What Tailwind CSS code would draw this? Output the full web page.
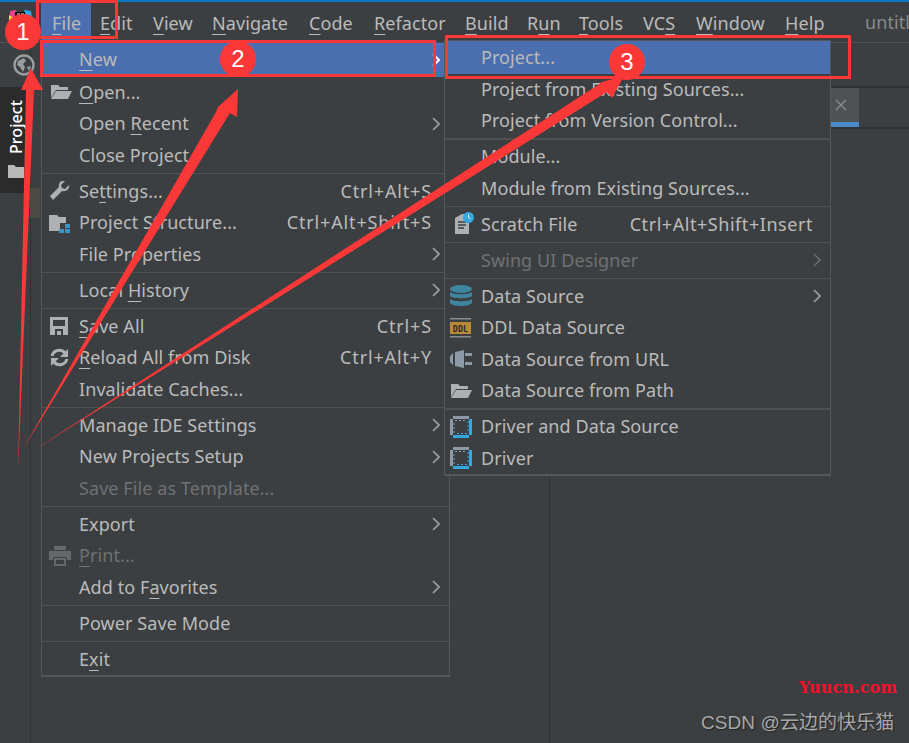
<!DOCTYPE html>
<html lang="en">
  <head>
    <meta charset="UTF-8" />
    <title>New Project</title>
    <script src="https://cdn.jsdelivr.net/npm/@tailwindcss/browser@4"></script>
  </head>
  <body class="select-none">
    <div class="relative w-[909px] h-[743px] overflow-hidden bg-[#3c3f41] font-['Noto_Sans','Noto_Sans_CJK_SC',sans-serif] text-[18px] tracking-[0.08px] text-[#bbbbbb]">
      <!-- top bar -->
      <div class="h-[2px] bg-[#0a78c2]"></div>
      <div class="flex h-[41px] items-end border-b border-[#515151]">
        <div class="w-[41px] shrink-0 self-start pl-[9px] pt-[8px]">
          <svg class="block" width="24" height="12" viewBox="0 0 24 12">
            <path d="M1 1l6-1 1 6-5 6H0z" fill="#ef3f8a" />
            <path d="M0 5l5 3-3 4H0z" fill="#f7d843" />
            <path d="M15 0l7 1 1 8-6 3z" fill="#2aa8e8" />
            <rect x="6" y="2" width="10" height="10" fill="#000" />
            <path d="M8 4h3M12 4h3" stroke="#fff" stroke-width="1.2" />
          </svg>
        </div>
        <div class="flex h-[40px] w-[50px] shrink-0 items-center bg-[#4b6eaf] pl-[11px] pt-[2px]"><span><u class="underline-offset-4">F</u>ile</span></div>
        <div class="flex h-[40px] w-[53px] shrink-0 items-center pl-[9px] pt-[2px]"><span><u class="underline-offset-4">E</u>dit</span></div>
        <div class="flex h-[40px] w-[58px] shrink-0 items-center pl-[9px] pt-[2px]"><span><u class="underline-offset-4">V</u>iew</span></div>
        <div class="flex h-[40px] w-[107px] shrink-0 items-center pl-[10px] pt-[2px]"><span><u class="underline-offset-4">N</u>avigate</span></div>
        <div class="flex h-[40px] w-[65px] shrink-0 items-center pt-[2px]"><span><u class="underline-offset-4">C</u>ode</span></div>
        <div class="flex h-[40px] w-[91px] shrink-0 items-center pt-[2px]"><span><u class="underline-offset-4">R</u>efactor</span></div>
        <div class="flex h-[40px] w-[62px] shrink-0 items-center pt-[2px]"><span><u class="underline-offset-4">B</u>uild</span></div>
        <div class="flex h-[40px] w-[52px] shrink-0 items-center pt-[2px]"><span>R<u class="underline-offset-4">u</u>n</span></div>
        <div class="flex h-[40px] w-[64px] shrink-0 items-center pt-[2px]"><span><u class="underline-offset-4">T</u>ools</span></div>
        <div class="flex h-[40px] w-[53px] shrink-0 items-center pt-[2px]"><span>VC<u class="underline-offset-4">S</u></span></div>
        <div class="flex h-[40px] w-[89px] shrink-0 items-center pt-[2px]"><span><u class="underline-offset-4">W</u>indow</span></div>
        <div class="flex h-[40px] w-[80px] shrink-0 items-center pt-[2px]"><span><u class="underline-offset-4">H</u>elp</span></div>
        <div class="flex h-[40px] shrink-0 items-center text-[#8a8a8a]"><span>untitl</span></div>
      </div>

      <!-- body under the bar -->
      <div class="flex h-[700px]">
        <div class="w-[31px] shrink-0 border-r border-[#323232]">
          <div class="flex h-[44px] items-center pl-[13px]">
            <svg class="shrink-0" width="22" height="22" viewBox="0 0 22 22">
              <circle cx="11" cy="11" r="9.5" fill="#3c3f41" stroke="#9a9c9e" stroke-width="2.4" />
              <path d="M5 7l6-3 2 3-3 3 2 3-2 5-3-5-3-2zM14 13l4-1-2 5z" fill="#9a9c9e" />
            </svg>
          </div>
          <div class="flex h-[106px] w-[30px] flex-col items-center bg-[#2b2b2b] pl-[1px] pt-[13px]">
            <span class="text-[16px] font-medium leading-[18px] text-white [writing-mode:vertical-rl] rotate-180">Project</span>
            <svg class="mt-[11px]" width="16" height="13" viewBox="0 0 16 13"><path d="M0 0h6l2 2h8v11H0z" fill="#b8b8b8" /></svg>
          </div>
          <div class="-mt-[5px] ml-[30px] h-[30px] w-[10px] bg-[#4b4a43]"></div>
        </div>
        <div class="flex-1"></div>
      </div>

      <!-- editor tab behind the menus -->
      <div class="absolute left-[831px] top-[86px] flex h-[43px] w-[78px] border-y-2 border-[#323232]">
        <div class="flex h-full w-[28px] items-center border-b-[5px] border-[#4a88c7] bg-[#4e5254] pl-[4px]">
          <svg width="12" height="12" viewBox="0 0 12 12"><path d="M1 1l10 10M11 1L1 11" stroke="#8a8d8f" stroke-width="1.4" /></svg>
        </div>
      </div>
      <div class="absolute left-[549px] top-[470px] h-[273px] w-px bg-[#323232]"></div>

      <!-- File menu -->
      <div class="absolute left-[41px] top-[43px] w-[409px] border border-t-0 border-[#555759] border-b-2 bg-[#3c3f41]">
        <div class="flex h-[33.5px] items-center bg-[#4b6eaf] pl-[6px] pr-[9px]"><span class="w-[31px]"></span><span><u class="underline-offset-4">N</u>ew</span><svg class="ml-auto" width="8" height="14" viewBox="0 0 8 14"><path d="M1 1l6 6-6 6" fill="none" stroke="#ffffff" stroke-width="2" /></svg></div>
        <div class="flex h-[31.5px] items-center pl-[8px] pr-[17px]"><span class="w-[29px]"><svg width="22" height="18" viewBox="0 0 22 18"><path d="M1 2h7l2 2h8v3H6L1 15z" fill="#aeb0b2" /><path d="M6 8h16l-4 8H1z" fill="#aeb0b2" /></svg></span><span><u class="underline-offset-4">O</u>pen...</span></div>
        <div class="flex h-[31.5px] items-center pl-[6px] pr-[9px]"><span class="w-[31px]"></span><span>Open <u class="underline-offset-4">R</u>ecent</span><svg class="ml-auto" width="8" height="14" viewBox="0 0 8 14"><path d="M1 1l6 6-6 6" fill="none" stroke="#a0a2a4" stroke-width="1.6" /></svg></div>
        <div class="flex h-[31.5px] items-center pl-[6px] pr-[17px]"><span class="w-[31px]"></span><span>Close Project</span></div>
        <div class="flex h-[4.5px] items-center"><div class="h-px w-full bg-[#515151]"></div></div>
        <div class="flex h-[31.5px] items-center pl-[7px] pr-[17px]"><span class="w-[30px]"><svg width="22" height="20" viewBox="0 0 22 20"><path d="M20 4l-4 4-3-1-1-3 4-4c-4-1-7 2-6 6L1 15l3 4 9-9c4 1 8-2 7-6z" fill="#aeb0b2" /></svg></span><span>Se<u class="underline-offset-4">t</u>tings...</span><span class="ml-auto tracking-[0.85px]">Ctrl+Alt+S</span></div>
        <div class="flex h-[31.5px] items-center pl-[7px] pr-[17px]"><span class="w-[30px]"><svg width="22" height="20" viewBox="0 0 22 20"><path d="M0 2h8l2 2h7v6h-6v8H0z" fill="#aeb0b2" /><path d="M16 11h5v4h-5zM10 16h5v4h-5zM16 16h5v4h-5z" fill="#3a94c8" /></svg></span><span>Project Structure...</span><span class="ml-auto tracking-[0.85px]">Ctrl+Alt+Shift+S</span></div>
        <div class="flex h-[31.5px] items-center pl-[6px] pr-[9px]"><span class="w-[31px]"></span><span>File Properties</span><svg class="ml-auto" width="8" height="14" viewBox="0 0 8 14"><path d="M1 1l6 6-6 6" fill="none" stroke="#a0a2a4" stroke-width="1.6" /></svg></div>
        <div class="flex h-[4.5px] items-center"><div class="h-px w-full bg-[#515151]"></div></div>
        <div class="flex h-[31.5px] items-center pl-[6px] pr-[9px]"><span class="w-[31px]"></span><span>Local <u class="underline-offset-4">H</u>istory</span><svg class="ml-auto" width="8" height="14" viewBox="0 0 8 14"><path d="M1 1l6 6-6 6" fill="none" stroke="#a0a2a4" stroke-width="1.6" /></svg></div>
        <div class="flex h-[4.5px] items-center"><div class="h-px w-full bg-[#515151]"></div></div>
        <div class="flex h-[31.5px] items-center pl-[8px] pr-[17px]"><span class="w-[29px]"><svg width="18" height="18" viewBox="0 0 18 18"><path fill-rule="evenodd" d="M0 0h18v18H0zM3 3v6h12V3zM5 12v6h8v-6z" fill="#aeb0b2" /><rect x="7" y="14" width="4" height="4" fill="#aeb0b2" /></svg></span><span><u class="underline-offset-4">S</u>ave All</span><span class="ml-auto tracking-[0.85px]">Ctrl+S</span></div>
        <div class="flex h-[31.5px] items-center pl-[8px] pr-[17px]"><span class="w-[29px]"><svg width="19" height="19" viewBox="0 0 19 19"><path d="M2 8a7.5 7.5 0 0 1 13-3M17 11a7.5 7.5 0 0 1-13 3" fill="none" stroke="#aeb0b2" stroke-width="3" /><path d="M18 1v8h-8zM1 18v-8h8z" fill="#aeb0b2" /></svg></span><span><u class="underline-offset-4">R</u>eload All from Disk</span><span class="ml-auto tracking-[0.85px]">Ctrl+Alt+Y</span></div>
        <div class="flex h-[31.5px] items-center pl-[6px] pr-[17px]"><span class="w-[31px]"></span><span>Invalidate Caches...</span></div>
        <div class="flex h-[4.5px] items-center"><div class="h-px w-full bg-[#515151]"></div></div>
        <div class="flex h-[31.5px] items-center pl-[6px] pr-[9px]"><span class="w-[31px]"></span><span>Manage IDE Settings</span><svg class="ml-auto" width="8" height="14" viewBox="0 0 8 14"><path d="M1 1l6 6-6 6" fill="none" stroke="#a0a2a4" stroke-width="1.6" /></svg></div>
        <div class="flex h-[31.5px] items-center pl-[6px] pr-[9px]"><span class="w-[31px]"></span><span>New Projects Setup</span><svg class="ml-auto" width="8" height="14" viewBox="0 0 8 14"><path d="M1 1l6 6-6 6" fill="none" stroke="#a0a2a4" stroke-width="1.6" /></svg></div>
        <div class="flex h-[31.5px] items-center pl-[6px] pr-[17px] text-[#6f7173]"><span class="w-[31px]"></span><span>Save File as Template...</span></div>
        <div class="flex h-[4.5px] items-center"><div class="h-px w-full bg-[#515151]"></div></div>
        <div class="flex h-[31.5px] items-center pl-[6px] pr-[9px]"><span class="w-[31px]"></span><span>Export</span><svg class="ml-auto" width="8" height="14" viewBox="0 0 8 14"><path d="M1 1l6 6-6 6" fill="none" stroke="#a0a2a4" stroke-width="1.6" /></svg></div>
        <div class="flex h-[31.5px] items-center pl-[7px] pr-[17px] text-[#6f7173]"><span class="w-[30px]"><svg width="22" height="20" viewBox="0 0 22 20"><path fill-rule="evenodd" d="M5 0h12v4H5zM0 5h22v9h-4v-3H4v3H0zM5 12h12v8H5zM7 14v4h8v-4z" fill="#66686a" /></svg></span><span><u class="underline-offset-4">P</u>rint...</span></div>
        <div class="flex h-[31.5px] items-center pl-[6px] pr-[9px]"><span class="w-[31px]"></span><span>Add to F<u class="underline-offset-4">a</u>vorites</span><svg class="ml-auto" width="8" height="14" viewBox="0 0 8 14"><path d="M1 1l6 6-6 6" fill="none" stroke="#a0a2a4" stroke-width="1.6" /></svg></div>
        <div class="flex h-[4.5px] items-center"><div class="h-px w-full bg-[#515151]"></div></div>
        <div class="flex h-[31.5px] items-center pl-[6px] pr-[17px]"><span class="w-[31px]"></span><span>Power Save Mode</span></div>
        <div class="flex h-[4.5px] items-center"><div class="h-px w-full bg-[#515151]"></div></div>
        <div class="flex h-[31.5px] items-center pl-[6px] pr-[17px]"><span class="w-[31px]"></span><span>E<u class="underline-offset-4">x</u>it</span></div>
      </div>

      <!-- New submenu -->
      <div class="absolute left-[444px] top-[40px] w-[387px] border border-[#555759] border-b-2 bg-[#3c3f41]">
        <div class="flex h-[32.5px] items-center bg-[#4b6eaf] pl-[36px]"><span>Project...</span></div>
        <div class="flex h-[31.5px] items-center pl-[36px]"><span>Project from Existing Sources...</span></div>
        <div class="flex h-[31.5px] items-center pl-[36px]"><span>Project from Version Control...</span></div>
        <div class="flex h-[4.5px] items-center"><div class="h-[2px] w-full bg-[#515151]"></div></div>
        <div class="flex h-[31.5px] items-center pl-[36px]"><span>Module...</span></div>
        <div class="flex h-[31.5px] items-center pl-[36px]"><span>Module from Existing Sources...</span></div>
        <div class="flex h-[4.5px] items-center"><div class="h-px w-full bg-[#515151]"></div></div>
        <div class="flex h-[31.5px] items-center pl-[8px] pr-[17px]"><span class="w-[28px]"><svg width="21" height="24" viewBox="0 0 21 24"><path d="M2 6l7-4h3v3h4v17H2z" fill="#aeb0b2" /><path d="M5 10h8M5 13h8M5 16h6" stroke="#3c3f41" stroke-width="1.4" /><circle cx="15.5" cy="5.5" r="5.5" fill="#35a8e0" /><path d="M15.5 2.5v3l2 1.5" fill="none" stroke="#fff" stroke-width="1" /></svg></span><span>Scratch File</span><span class="ml-auto tracking-[0.55px]">Ctrl+Alt+Shift+Insert</span></div>
        <div class="flex h-[4.5px] items-center"><div class="h-px w-full bg-[#515151]"></div></div>
        <div class="flex h-[31.5px] items-center pr-[9px] pl-[36px] text-[#6f7173]"><span>Swing UI Designer</span><svg class="ml-auto" width="8" height="14" viewBox="0 0 8 14"><path d="M1 1l6 6-6 6" fill="none" stroke="#66686a" stroke-width="1.6" /></svg></div>
        <div class="flex h-[4.5px] items-center"><div class="h-px w-full bg-[#515151]"></div></div>
        <div class="flex h-[31.5px] items-center pl-[5px] pr-[9px]"><span class="w-[31px]"><svg width="22" height="22" viewBox="0 0 22 22"><ellipse cx="11" cy="4" rx="11" ry="4" fill="#3e86a0" /><path d="M0 7c3 3 19 3 22 0v4c-3 3-19 3-22 0zM0 14c3 3 19 3 22 0v4c-3 4-19 4-22 0z" fill="#3e86a0" /></svg></span><span>Data Source</span><svg class="ml-auto" width="8" height="14" viewBox="0 0 8 14"><path d="M1 1l6 6-6 6" fill="none" stroke="#a0a2a4" stroke-width="1.6" /></svg></div>
        <div class="flex h-[31.5px] items-center pl-[5px]"><span class="w-[31px]"><svg width="22" height="20" viewBox="0 0 22 20"><rect y="0" width="21" height="1.5" fill="#8a8d8f" /><rect y="18" width="21" height="1.5" fill="#8a8d8f" /><rect y="4" width="21" height="12" fill="#b88a35" /><text x="10.5" y="14" text-anchor="middle" font-family="'DejaVu Sans Mono'" font-weight="700" font-size="8.5" fill="#2b2b2b">DDL</text></svg></span><span>DDL Data Source</span></div>
        <div class="flex h-[31.5px] items-center pl-[5px]"><span class="w-[31px]"><svg width="22" height="18" viewBox="0 0 22 18"><path d="M0 6l3-3v12l-3-3zM5 2l9-2v18l-9-2z" fill="#8b9aa6" /><path d="M15 3h7v3h-7zM15 12h7v3h-7z" fill="#8b9aa6" /></svg></span><span>Data Source from URL</span></div>
        <div class="flex h-[31.5px] items-center pl-[5px]"><span class="w-[31px]"><svg width="22" height="18" viewBox="0 0 22 18"><path d="M1 2h7l2 2h8v3H6L1 15z" fill="#aeb0b2" /><path d="M6 8h16l-4 8H1z" fill="#aeb0b2" /></svg></span><span>Data Source from Path</span></div>
        <div class="flex h-[4.5px] items-center"><div class="h-[2px] w-full bg-[#515151]"></div></div>
        <div class="flex h-[31.5px] items-center pl-[5px]"><span class="w-[31px]"><svg width="22" height="22" viewBox="0 0 22 22"><path d="M3 0h16v3H3zM0 3h3v16H0z" fill="#8b9aa6" /><path d="M19 3h3v16h-3zM3 19h16v3H3z" fill="#35a8e0" /><path d="M5 4h2v1H5zM9 4h2v1H9zM13 4h2v1h-2zM3.500 7h1v2h-1zM3.500 11h1v2h-1zM3.500 15h1v2h-1z" fill="#8b9aa6" /><path d="M7 17h2v1H7zM11 17h2v1h-2zM15 17h2v1h-2zM17.500 5h1v2h-1zM17.500 9h1v2h-1zM17.500 13h1v2h-1z" fill="#35a8e0" /></svg></span><span>Driver and Data Source</span></div>
        <div class="flex h-[31.5px] items-center pl-[5px]"><span class="w-[31px]"><svg width="22" height="22" viewBox="0 0 22 22"><path d="M3 0h16v3H3zM0 3h3v16H0z" fill="#8b9aa6" /><path d="M19 3h3v16h-3zM3 19h16v3H3z" fill="#35a8e0" /><path d="M5 4h2v1H5zM9 4h2v1H9zM13 4h2v1h-2zM3.500 7h1v2h-1zM3.500 11h1v2h-1zM3.500 15h1v2h-1z" fill="#8b9aa6" /><path d="M7 17h2v1H7zM11 17h2v1h-2zM15 17h2v1h-2zM17.500 5h1v2h-1zM17.500 9h1v2h-1zM17.500 13h1v2h-1z" fill="#35a8e0" /></svg></span><span>Driver</span></div>
      </div>

      <!-- annotations -->
      <svg class="absolute inset-0" width="909" height="743" viewBox="0 0 909 743">
        <g fill="none" stroke="#fb3838" stroke-width="3">
          <rect x="37.500" y="1.500" width="79" height="36" />
          <rect x="41.500" y="41.500" width="393" height="34" />
          <rect x="446.500" y="36.500" width="403" height="41" />
        </g>
        <g fill="#fb3838">
          <path d="M18 472 L26 90 L21 90 L31 68 L43 90 L34 90 Z" />
          <path d="M23 449 L216 112 L218 107 L238 89 L237 117 L230 113 Z" />
          <path d="M31 452 L598 85 L602 82 L624 76 L612 98 L607 92 Z" />
          <circle cx="23" cy="32" r="18" />
          <circle cx="238" cy="59" r="18" />
          <circle cx="627" cy="62" r="18" />
        </g>
      </svg>
      <span class="absolute left-[5px] top-[18px] w-[36px] text-center font-['Liberation_Sans',sans-serif] text-[24px] leading-[28px] text-white">1</span>
      <span class="absolute left-[220px] top-[45px] w-[36px] text-center font-['Liberation_Sans',sans-serif] text-[24px] leading-[28px] text-white">2</span>
      <span class="absolute left-[609px] top-[48px] w-[36px] text-center font-['Liberation_Sans',sans-serif] text-[24px] leading-[28px] text-white">3</span>

      <!-- watermarks -->
      <span class="absolute left-[799px] top-[678px] font-['DejaVu_Serif',serif] text-[16px] font-bold leading-[20px] text-[#f5102a]">Yuucn.com</span>
      <span class="absolute left-[701px] top-[711px] font-['Liberation_Sans','Noto_Sans_CJK_SC',sans-serif] text-[19px] leading-[24px] text-[#a8a8a8] [text-shadow:1px_1px_1px_#222]">CSDN @云边的快乐猫</span>
    </div>
  </body>
</html>
